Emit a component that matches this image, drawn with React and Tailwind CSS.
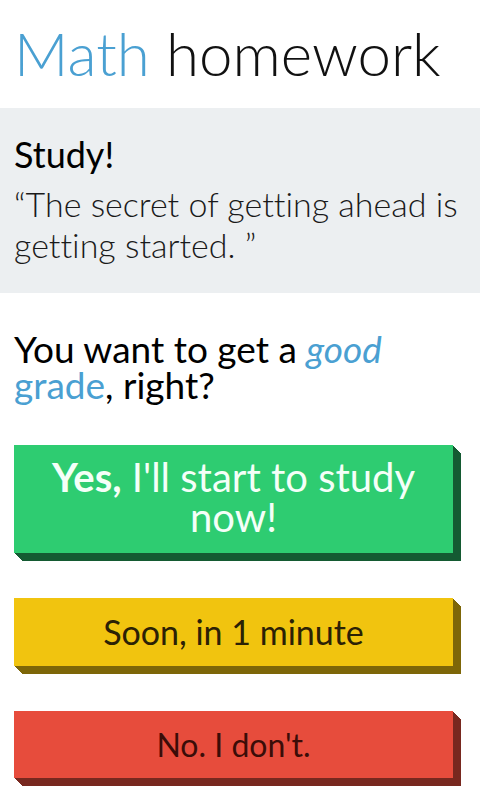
export default function App() {
  const font = { fontFamily: "Lato, 'Open Sans', sans-serif" };
  return (
    <div className="w-[480px] min-h-[795px] bg-white [font-variant-ligatures:none]" style={font}>
      <h1 className="px-[14px] pt-[17px] pb-[19px] text-[60px] font-light leading-[72px] text-[#111]">
        <span className="text-[#4aa0d2]">Math</span> homework
      </h1>

      <div className="bg-[#eceff1] px-[14px] pt-[24px] pb-[28px]">
        <p className="text-[36px] leading-[44px] text-black">Study!</p>
        <p className="mt-[7px] text-[34px] font-light leading-[41px] text-[#1a1a1a]">
          “The secret of getting ahead is getting started. ”
        </p>
      </div>

      <p className="px-[14px] pt-[38px] text-[37px] leading-[36px] text-black">
        You want to get a <em className="text-[#4aa0d2]">good</em>{" "}
        <span className="text-[#4aa0d2]">grade</span>, right?
      </p>

      <div className="flex flex-col gap-[45px] pl-[14px] pr-[27px] pt-[42px] pb-[9px]">
        <button className="flex flex-col items-center justify-center pb-[5px] h-[108px] bg-[#2ecc71] text-[#f4fff8] text-[40px] leading-[40px] shadow-[1px_1px_0_#145a32,2px_2px_0_#145a32,3px_3px_0_#145a32,4px_4px_0_#145a32,5px_5px_0_#145a32,6px_6px_0_#145a32,7px_7px_0_#145a32,8px_8px_0_#145a32]">
          <span>
            <b className="font-bold">Yes,</b> I'll start to study
          </span>
          <span>now!</span>
        </button>
        <button className="flex items-center justify-center h-[68px] bg-[#f1c40f] text-[#2b2105] text-[34px] leading-[40px] shadow-[1px_1px_0_#7d6608,2px_2px_0_#7d6608,3px_3px_0_#7d6608,4px_4px_0_#7d6608,5px_5px_0_#7d6608,6px_6px_0_#7d6608,7px_7px_0_#7d6608,8px_8px_0_#7d6608]">
          Soon, in 1 minute
        </button>
        <button className="flex items-center justify-center h-[67px] bg-[#e74c3c] text-[#3b0d08] text-[32px] leading-[40px] shadow-[1px_1px_0_#78281f,2px_2px_0_#78281f,3px_3px_0_#78281f,4px_4px_0_#78281f,5px_5px_0_#78281f,6px_6px_0_#78281f,7px_7px_0_#78281f,8px_8px_0_#78281f]">
          No. I don't.
        </button>
      </div>
    </div>
  );
}
